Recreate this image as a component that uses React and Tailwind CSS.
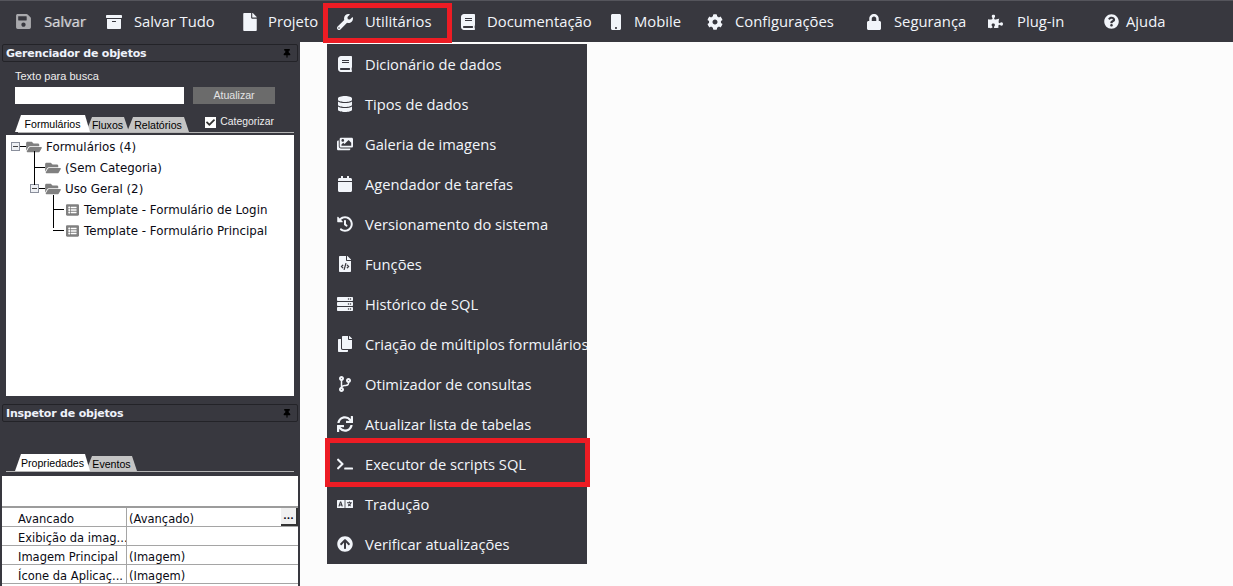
import React from "react";
import {
  FaSave,
  FaArchive,
  FaFile,
  FaWrench,
  FaBook,
  FaMobile,
  FaCog,
  FaLock,
  FaPuzzlePiece,
  FaQuestionCircle,
  FaDatabase,
  FaImages,
  FaCalendar,
  FaHistory,
  FaFileCode,
  FaServer,
  FaCopy,
  FaCodeBranch,
  FaSync,
  FaTerminal,
  FaLanguage,
  FaArrowCircleUp,
  FaThumbtack,
  FaFolderOpen,
  FaCheck,
  FaListAlt,
} from "react-icons/fa";

const uiFont = "font-['Open_Sans',sans-serif]";
const panelFont = "font-['Liberation_Sans',sans-serif]";
const treeFont = "font-['DejaVu_Sans',sans-serif]";

// top toolbar entries, with the distance to the next one
const toolbar = [
  { label: "Salvar", icon: FaSave, cls: "w-[91px] text-[#a9a9ad]", box: "w-[29px]", textCls: "text-[#d8d8dc] [text-shadow:1px_0_0_#77777d]", iconCls: "h-[17px]" },
  { label: "Salvar Tudo", icon: FaArchive, cls: "w-[135px]", box: "w-[28px]", iconCls: "h-[16px]" },
  { label: "Projeto", icon: FaFile, cls: "w-[96px]", box: "w-[27px]", iconCls: "h-[18px]" },
  { label: "Utilitários", icon: FaWrench, cls: "w-[123px]", box: "w-[28px]", iconCls: "h-[16px]" },
  { label: "Documentação", icon: FaBook, cls: "w-[146px]", box: "w-[27px]", iconCls: "h-[16px]" },
  { label: "Mobile", icon: FaMobile, cls: "w-[101px]", box: "w-[28px]", iconCls: "h-[16px] ml-[2px]" },
  { label: "Configurações", icon: FaCog, cls: "w-[159px]", box: "w-[28px]", iconCls: "h-[16px]" },
  { label: "Segurança", icon: FaLock, cls: "w-[122px]", box: "w-[28px]", iconCls: "h-[16px]" },
  { label: "Plug-in", icon: FaPuzzlePiece, cls: "w-[116px]", box: "w-[29px]", iconCls: "h-[15px]" },
];

const menuItems = [
  { label: "Dicionário de dados", icon: FaBook },
  { label: "Tipos de dados", icon: FaDatabase },
  { label: "Galeria de imagens", icon: FaImages },
  { label: "Agendador de tarefas", icon: FaCalendar },
  { label: "Versionamento do sistema", icon: FaHistory },
  { label: "Funções", icon: FaFileCode },
  { label: "Histórico de SQL", icon: FaServer },
  { label: "Criação de múltiplos formulários", icon: FaCopy },
  { label: "Otimizador de consultas", icon: FaCodeBranch },
  { label: "Atualizar lista de tabelas", icon: FaSync },
  { label: "Executor de scripts SQL", icon: FaTerminal },
  { label: "Tradução", icon: FaLanguage },
  { label: "Verificar atualizações", icon: FaArrowCircleUp },
];

const props = [
  { name: "Avancado", value: "(Avançado)", more: true },
  { name: "Exibição da imag...", value: "" },
  { name: "Imagem Principal", value: "(Imagem)" },
  { name: "Ícone da Aplicaç...", value: "(Imagem)" },
];

const PanelHeader = ({ title }) => (
  <div className="mx-[2px] h-[18px] flex items-center justify-between rounded-[2px] border border-[#232328] pl-[3px] pr-[6px]">
    <span className={`${treeFont} pt-[2px] text-[11px] font-bold text-[#eef2fa] tracking-[-0.2px]`}>{title}</span>
    <FaThumbtack className="w-[8px] h-[9px] text-black" />
  </div>
);

const Tab = ({ label, active, width }) => (
  <div
    className={`${width} ${panelFont} ${
      active ? "h-[17px] bg-white z-10 -mr-[4px]" : "h-[15px] bg-[#c4c4c4] -mr-[2px]"
    } pt-[2px] flex items-center justify-center text-[10.6px] text-black [clip-path:polygon(6px_0,calc(100%-5px)_0,100%_100%,0_100%)]`}
  >
    {label}
  </div>
);

const Minus = () => (
  <span className="w-[9px] h-[9px] bg-[#eef0f4] border border-[#8a8f9c] flex items-center justify-center shrink-0">
    <span className="w-[5px] h-px bg-[#444]" />
  </span>
);

const TreeRow = ({ pad, label, minus, form, dash }) => (
  <div className={`${pad} h-[21px] flex items-center whitespace-nowrap`}>
    {dash && <span className="w-[11px] h-px bg-black shrink-0" />}
    {minus && <Minus />}
    {minus && <span className="w-[6px] h-px bg-black shrink-0" />}
    {form ? (
      <FaListAlt className="w-[13px] h-[14px] text-[#808080] ml-[2px] mr-[5px] shrink-0" />
    ) : (
      <FaFolderOpen className="w-[16px] h-[14px] text-[#808080] mr-[4px] shrink-0" />
    )}
    <span className={`${treeFont} pt-[2px] text-[11.85px] text-[#0a0a14]`}>{label}</span>
  </div>
);

const Sidebar = () => (
  <div className="w-[300px] shrink-0 bg-[#38383f] pt-[2px] flex flex-col">
    <PanelHeader title="Gerenciador de objetos" />
    <div className={`${panelFont} pl-[15px] pt-[7px] text-[11px] leading-[14px] text-[#eeeeee]`}>Texto para busca</div>
    <div className="flex pl-[15px] pt-[4px] gap-[9px]">
      <div className="w-[169px] h-[17px] bg-white" />
      <div className={`${panelFont} pt-px w-[82px] h-[17px] bg-[#6b6b6b] flex items-center justify-center text-[10.6px] text-[#e4e4e4]`}>
        Atualizar
      </div>
    </div>
    <div className="flex items-end justify-between h-[18px] mt-[10px] ml-[15px] mr-[26px]">
      <div className="flex items-end">
        <Tab label="Formulários" active width="w-[75px]" />
        <Tab label="Fluxos" width="w-[43px]" />
        <Tab label="Relatórios" width="w-[62px]" />
      </div>
      <div className={`${panelFont} flex items-center gap-[4px] text-[10.4px] text-[#eeeeee] pb-[2px]`}>
        <span className="w-[11px] h-[11px] bg-white flex items-center justify-center">
          <FaCheck className="w-[9px] h-[9px] text-[#333]" />
        </span>
        Categorizar
      </div>
    </div>
    <div className="ml-[18px] mr-[6px] h-px bg-[#b4b4b4]" />
    <div className="mx-[6px] mt-[2px] h-[261px] bg-white pt-px relative">
      {/* tree connectors */}
      <span className="absolute left-[28px] top-[16px] w-px h-[34px] bg-black" />
      <span className="absolute left-[47px] top-[60px] w-px h-[33px] bg-black" />
      <TreeRow pad="pl-[5px]" label="Formulários (4)" minus />
      <TreeRow pad="pl-[28px]" label="(Sem Categoria)" dash />
      <TreeRow pad="pl-[24px]" label="Uso Geral (2)" minus />
      <TreeRow pad="pl-[47px]" label="Template - Formulário de Login" form dash />
      <TreeRow pad="pl-[47px]" label="Template - Formulário Principal" form dash />
    </div>
    <div className="h-[8px]" />
    <PanelHeader title="Inspetor de objetos" />
    <div className="flex items-end h-[18px] mt-[31px] ml-[15px]">
      <Tab label="Propriedades" active width="w-[75px]" />
      <Tab label="Eventos" width="w-[51px]" />
    </div>
    <div className="ml-[6px] mr-[6px] h-px bg-[#b4b4b4]" />
    <div className="flex-1 mx-[2px] mt-[4px] bg-white overflow-hidden">
      <div className="h-[32px] border-b-2 border-[#9c9c9c]" />
      {props.map((row) => (
        <div key={row.name} className={`${treeFont} h-[19px] flex border-b border-[#a5a5a5] text-[11.5px] text-[#0a0a14] whitespace-nowrap`}>
          <div className="w-[125px] pl-[16px] border-r border-[#a5a5a5] leading-[23px] overflow-hidden">{row.name}</div>
          <div className="flex-1 pl-[2px] leading-[23px] flex justify-between">
            {row.value}
            {row.more && (
              <span className="w-[17px] h-[18px] bg-[#f0f0f0] border-r-2 border-b-2 border-[#333] flex items-center justify-center text-[9px] font-bold leading-none">
                ...
              </span>
            )}
          </div>
        </div>
      ))}
    </div>
  </div>
);

const App = () => (
  <div className="w-[1233px] h-[586px] overflow-hidden flex flex-col bg-[#fcfcfc] relative">
    {/* Toolbar */}
    <div className={`${uiFont} h-[42px] shrink-0 bg-[#38383f] border-t border-[#55555c] flex items-center pl-[15px] text-[14.8px] text-[#f2f5fa]`}>
      {toolbar.map((item) => {
        const Icon = item.icon;
        return (
          <div key={item.label} className={`${item.cls} shrink-0 flex items-center`}>
            <span className={`${item.box} shrink-0`}>
              <Icon className={`${item.iconCls} w-auto`} />
            </span>
            <span className={`${item.textCls || ""} whitespace-nowrap`}>{item.label}</span>
          </div>
        );
      })}
      <FaQuestionCircle className="w-[15px] h-[15px] mr-[7px] shrink-0" />
      <span>Ajuda</span>
    </div>

    <div className="flex-1 flex min-h-0">
      <Sidebar />
      <div className="flex-1" />
    </div>

    {/* Red box round the open toolbar entry */}
    <div className="absolute left-[323px] top-[3px] w-[129px] h-[40px] border-[5px] border-[#ed1c24]" />

    {/* Utilitários dropdown */}
    <div className={`${uiFont} absolute left-[327px] top-[44px] w-[260px] bg-[#38383f] text-[14.7px] text-[#f2f5fa]`}>
      {menuItems.map((item) => {
        const Icon = item.icon;
        return (
          <div key={item.label} className="h-[40px] flex items-center pl-[10px] overflow-hidden">
            <span className="w-[28px] shrink-0">
              <Icon className="w-[16px] h-[16px]" />
            </span>
            <span className="whitespace-nowrap pt-[1px]">{item.label}</span>
          </div>
        );
      })}
    </div>

    {/* Red box round the SQL entry */}
    <div className="absolute left-[325px] top-[438px] w-[265px] h-[49px] border-[5px] border-[#ed1c24]" />
  </div>
);

export default App;
